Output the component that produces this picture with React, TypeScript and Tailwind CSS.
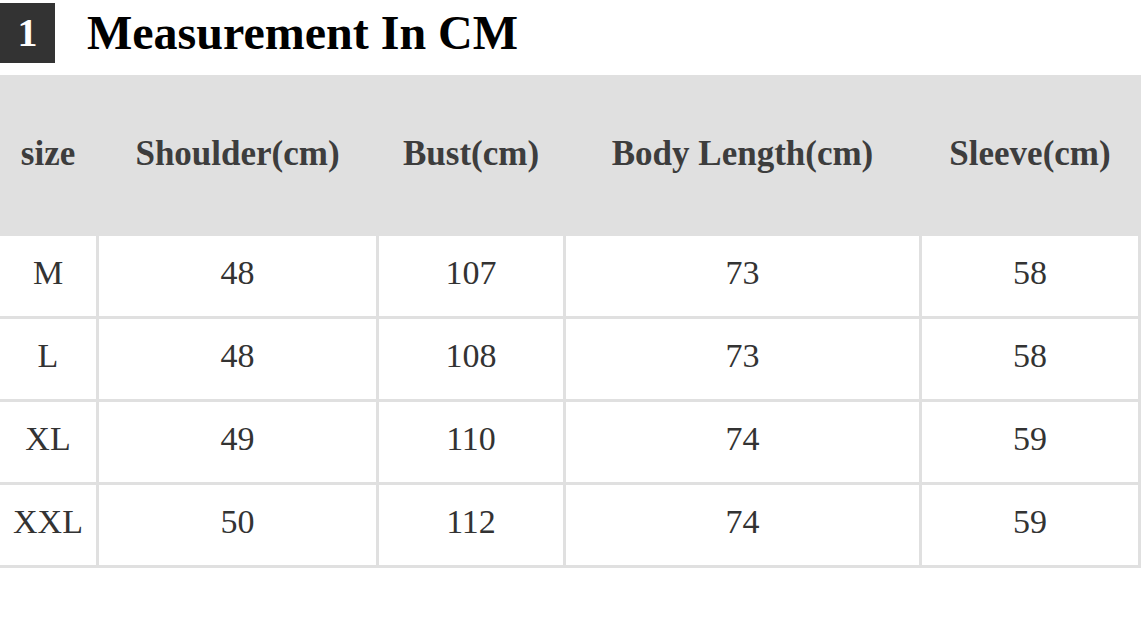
const headers = ["size", "Shoulder(cm)", "Bust(cm)", "Body Length(cm)", "Sleeve(cm)"]

const rows = [
  ["M", "48", "107", "73", "58"],
  ["L", "48", "108", "73", "58"],
  ["XL", "49", "110", "74", "59"],
  ["XXL", "50", "112", "74", "59"],
]

export default function App() {
  return (
    <div className="min-h-screen bg-white font-['Liberation_Serif','Times_New_Roman',serif]">
      <div className="flex items-center pt-[3px]">
        <div className="flex h-[60px] w-[55px] items-center justify-center bg-[#333333] text-[40px] font-bold text-white">
          1
        </div>
        <h1 className="ml-[32px] text-[48px] font-bold leading-none text-black">Measurement In CM</h1>
      </div>

      <div className="mt-[12px] grid w-[1141px] grid-cols-[96px_277px_184px_353px_216px] gap-[3px] bg-[#e0e0e0] pr-[3px] pb-[3px]">
        {headers.map((h) => (
          <div
            key={h}
            className="flex h-[158px] items-center justify-center bg-[#e0e0e0] text-[35px] font-bold text-[#3d3d3d]"
          >
            {h}
          </div>
        ))}
        {rows.map((row) =>
          row.map((cell, i) => (
            <div
              key={row[0] + i}
              className="flex h-[80px] items-center justify-center bg-white pb-[7px] text-[34px] text-[#333333]"
            >
              {cell}
            </div>
          )),
        )}
      </div>
    </div>
  )
}
